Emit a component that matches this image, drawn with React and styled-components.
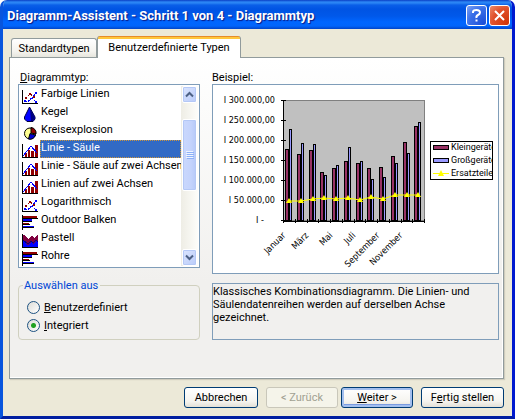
import React, { useState } from "react";
import styled, { createGlobalStyle, css } from "styled-components";

const UI_FONT = 'Roboto, "Liberation Sans", sans-serif';
const CHART_FONT = '"DejaVu Sans Condensed", "DejaVu Sans", sans-serif';

const GlobalStyle = createGlobalStyle`
  *, *::before, *::after { box-sizing: border-box; }
  body { margin: 0; background: #fff; }
  body, button, input { font: 11px/13px ${UI_FONT}; color: #000; }
`;

const Window = styled.main`
  display: flex;
  flex-direction: column;
  min-height: 100vh;
  border: solid;
  border-width: 0 3px 3px;
  border-color: #0831d9 #0019cf #001ea0 #0855dd;
  border-radius: 7px 7px 0 0;
  background: #ece9d8;
  overflow: hidden;
`;

const TitleBar = styled.header`
  display: flex;
  align-items: center;
  gap: 2px;
  height: 29px;
  margin: 0 -3px;
  padding: 2px 5px 0 7px;
  background: linear-gradient(#0a3fc4 0, #2b86f5 2px, #2a84f4 3px, #0a5fe8 5px, #0054e3 9px, #0058ea 16px, #0066ff 22px, #0165fb 26px, #0144c8 29px);
`;

const Title = styled.h1`
  flex: 1;
  margin: 0;
  color: #fff;
  font: bold 13px/20px ${UI_FONT};
  text-shadow: 1px 1px 1px #0a1883;
  white-space: nowrap;
`;

const CaptionButton = styled.button`
  display: grid;
  place-items: center;
  width: 21px;
  height: 21px;
  padding: 0;
  border: 1px solid #fff;
  border-radius: 3px;
  background: ${(p) =>
    p.$close
      ? "radial-gradient(circle at 90% 90%, #cf3508 0, #e0502a 60%, #ec8c6c 100%)"
      : "radial-gradient(circle at 90% 90%, #1c4fd8 0, #3a6fe8 60%, #80a4f4 100%)"};
`;

const Body = styled.div`
  flex: 1;
  display: flex;
  flex-direction: column;
  padding: 7px 8px 8px 6px;
`;

const TabList = styled.div`
  display: flex;
  align-items: flex-end;
  padding-left: 2px;
`;

const Tab = styled.button`
  position: relative;
  min-width: 86px;
  height: 19px;
  padding: 0 6px;
  border: 1px solid #919b9c;
  border-bottom: 0;
  border-radius: 3px 3px 0 0;
  background: linear-gradient(#fff, #f4f3ee 70%, #e6e5dd);
  white-space: nowrap;
  ${(p) =>
    p.$active &&
    css`
      min-width: 144px;
      height: 22px;
      margin-bottom: -1px;
      border-top: 0;
      background: linear-gradient(#e68b2c 1px, #ffc73c 1px 3px, #fff 3px);
      z-index: 1;
    `}
`;

const Panel = styled.section`
  flex: 1;
  display: grid;
  grid-template-columns: minmax(0, 182fr) minmax(0, 287fr);
  align-content: start;
  column-gap: 12px;
  padding: 13px 4px 0 8px;
  border: 1px solid #919b9c;
  background: linear-gradient(#fff, #fcfcfb 15%, #f1f0ee 70%);
  box-shadow: inset -1px -1px #fff, 1px 1px 1px #cfccbd;
`;

const Column = styled.div`
  display: flex;
  flex-direction: column;
`;

const FieldLabel = styled.span`
  padding-left: ${(p) => (p.$indent ? "2px" : "0")};
  line-height: 13px;
  white-space: nowrap;
`;

const ListFrame = styled.div`
  display: flex;
  padding: 1px;
  border: 1px solid #7f9db9;
  background: #fff;
`;

const List = styled.ul`
  flex: 1;
  min-width: 0;
  margin: 0;
  padding: 0 0 0 2px;
  list-style: none;
`;

const Item = styled.li`
  display: flex;
  gap: 2px;
  height: 18px;
  white-space: nowrap;
`;

const ItemIcon = styled.svg`
  flex: none;
  align-self: flex-end;
  width: 16px;
  height: 16px;
`;

const ItemText = styled.span`
  flex: 1;
  padding-left: 1px;
  line-height: 15px;
  ${(p) =>
    p.$selected &&
    css`
      color: #fff;
      background: #316ac5;
      outline: 1px dotted #ce953a;
      outline-offset: -1px;
    `}
`;

const ScrollBar = styled.div`
  display: flex;
  flex-direction: column;
  width: 17px;
  padding: 0 1px;
  background: linear-gradient(90deg, #eeede5, #fdfdfa);
`;

const ScrollButton = styled.button`
  display: grid;
  place-items: center;
  height: 17px;
  padding: 0;
  border: 1px solid #fff;
  border-radius: 2px;
  background: linear-gradient(135deg, #dbe5fe, #b9cbf9);
  box-shadow: inset 0 0 0 1px #b4c8f6;
`;

const ScrollTrack = styled.div`
  flex: 1;
  display: flex;
  padding-top: 16px;
`;

const ScrollThumb = styled.div`
  flex: 1;
  display: grid;
  place-items: center;
  height: 72px;
  border: 1px solid #fff;
  border-radius: 2px;
  background: linear-gradient(90deg, #cad8fd, #c4d3fc 60%, #b6c9f8);
  box-shadow: inset 0 0 0 1px #b4c8f6;
`;

const Preview = styled.div`
  height: 190px;
  border: 1px solid #7f9db9;
  background: #fff;
  overflow: hidden;
  svg { display: block; }
`;

const Description = styled.p`
  height: 57px;
  margin: 9px 0 0;
  padding: 1px 0;
  border: 1px solid #7f9db9;
  white-space: pre-line;
`;

const Group = styled.fieldset`
  display: flex;
  flex-direction: column;
  gap: 5px;
  height: 61px;
  margin: 11px 0 0;
  padding: 9px 8px 0;
  border: 1px solid #d0d0bf;
  border-radius: 4px;
`;

const Legend = styled.legend`
  margin-left: -4px;
  padding: 0 2px 0 1px;
  color: #0046d5;
`;

const RadioLabel = styled.label`
  display: flex;
  align-items: center;
  gap: 4px;
  height: 13px;
`;

const Radio = styled.input`
  appearance: none;
  width: 13px;
  height: 13px;
  margin: 0;
  border: 1px solid #1d5281;
  border-radius: 50%;
  background: linear-gradient(135deg, #dcdcd7, #fff);
  &:checked {
    background: radial-gradient(circle, #21a121 0 2px, transparent 3px), linear-gradient(135deg, #dcdcd7, #fff);
  }
`;

const Footer = styled.footer`
  display: flex;
  justify-content: flex-end;
  gap: 3px;
  padding-top: 8px;
`;

const PushButton = styled.button`
  width: ${(p) => (p.$wide ? "83px" : p.$medium ? "74px" : "72px")};
  height: 21px;
  margin-left: ${(p) => (p.$apart ? "5px" : "0")};
  padding: 0;
  border: 1px solid #003c74;
  border-radius: 3px;
  background: linear-gradient(#fff, #f5f4ef 70%, #e3e0d6);
  white-space: nowrap;
  ${(p) => p.$primary && css`box-shadow: inset 0 0 0 2px #a3bfee, inset 0 -3px #7a9be0;`}
  &:disabled {
    color: #a1a192;
    border-color: #c9c7ba;
    background: #f5f4ea;
  }
`;

const Axes = () => <path d="M.5 2v13.500H16" fill="none" stroke="#000" />;

const icons = {
  lines: (
    <>
      <Axes />
      <path d="M3 13.500h3l4-4 4 5" fill="none" stroke="#00f" strokeDasharray="2 1" />
      <path d="M4 10l4-4 4 3" fill="none" stroke="#900000" strokeDasharray="2 1" />
      <path d="M10 10l4-5" fill="none" stroke="#00f" />
      <path d="M2 12h2v2H2zM13 4h2v2h-2zM13 13h2v2h-2z" fill="#00f" />
      <path d="M3 9h2v2H3zM7 5h2v2H7zM11 8h2v2h-2z" fill="#900000" />
    </>
  ),
  cone: (
    <g shapeRendering="auto">
      <path d="M7.500 1L13 11v2l-2 2.500H5L2.500 13v-2z" fill="#00f" stroke="#000040" />
      <path d="M8 2l4.500 9v2L10.500 15H9z" fill="#000080" />
    </g>
  ),
  pie: (
    <g shapeRendering="auto">
      <circle cx="8" cy="9.500" r="5.500" fill="#ffff90" stroke="#000" />
      <path d="M9 9V3.500a5.500 5.500 0 0 1 5 6.500z" fill="#900000" stroke="#000" />
      <path d="M8 9.500l5.500 1.500a5.500 5.500 0 0 1-7 4z" fill="#0000d0" stroke="#000" />
    </g>
  ),
  combo: (
    <>
      <path d="M3 11h2v4H3zM6 8h2v7H6zM9 9h3v6H9zM13 3h3v12h-3z" fill="#900000" />
      <Axes />
      <path d="M1 14l8-10 6 7" fill="none" stroke="#00f" />
    </>
  ),
  bars: (
    <>
      <path d="M1 2h14v2H1zM1 9h6v2H1z" fill="#900000" />
      <path d="M1 5h9v2H1zM1 12h11v2H1z" fill="#00f" />
      <path d="M.5 1v15M1 4.500h15M1 7.500h9M1 10.500h7M1 13.500h11" stroke="#000" fill="none" />
    </>
  ),
  area: (
    <>
      <path d="M1 3h1l4 4 4-4 2 3 3-3h1v12H1z" fill="#800040" />
      <path d="M1 9l5 4 3-3 2 2 3-3 2 2v4H1z" fill="#00f" />
      <path d="M1 8l5 4 3-3 2 2 3-3 2 2" fill="none" stroke="#000080" />
      <Axes />
    </>
  ),
};

const types = [
  ["Farbige Linien", "lines"],
  ["Kegel", "cone"],
  ["Kreisexplosion", "pie"],
  ["Linie - Säule", "combo"],
  ["Linie - Säule auf zwei Achsen", "combo"],
  ["Linien auf zwei Achsen", "combo"],
  ["Logarithmisch", "lines"],
  ["Outdoor Balken", "bars"],
  ["Pastell", "area"],
  ["Rohre", "bars"],
];

/* x position, then the tops of the red bar, the blue bar and the line marker */
const groups = [
  [72, 64, 44, 115], [84, 69, 58, 115], [96, 65, 59, 113], [107, 87, 90, 112],
  [119, 83, 80, 113], [131, 76, 62, 112], [143, 78, 76, 114], [154, 83, 94, 111],
  [166, 82, 92, 113], [178, 71, 78, 109], [190, 57, 68, 109], [201, 41, 37, 109],
];
const yLabels = ["I 300.000,00", "I 250.000,00", "I 200.000,00", "I 150.000,00", "I 100.000,00", "I 50.000,00", "I -"];
const yLabelEnd = (label) => (label === "I -" ? 51 : 62);
const months = [["Januar", 73], ["März", 96], ["Mai", 120], ["Juli", 143], ["September", 167], ["November", 190]];

const ChartText = styled.text`
  font: 9px ${(p) => (p.$legend ? UI_FONT : CHART_FONT)};
  fill: #000;
`;

function SampleChart() {
  return (
    <svg width="285" height="188" viewBox="0 0 285 188" role="img" aria-label="Linie - Säule">
      <rect x="70.500" y="15.500" width="141" height="120" fill="#c0c0c0" stroke="#808080" />
      {groups.map(([x, red, blue]) => (
        <g key={x} stroke="#000" shapeRendering="crispEdges">
          <rect x={x + 0.5} y={red + 0.5} width="3" height={135 - red} fill="#993366" />
          <rect x={x + 4.5} y={blue + 0.5} width="2" height={135 - blue} fill="#9999ff" />
        </g>
      ))}
      <path
        d="M70.5 15v121H212M68 15.5h5M68 35.5h5M68 55.5h5M68 75.5h5M68 95.5h5M68 115.5h5M68 135.5h5M70.5 134v4M82.5 134v4M94.5 134v4M105.5 134v4M117.5 134v4M129.5 134v4M141.5 134v4M152.5 134v4M164.5 134v4M176.5 134v4M188.5 134v4M199.5 134v4M211.5 134v4"
        fill="none" stroke="#000" shapeRendering="crispEdges"
      />
      <polyline points={groups.map(([x, , , y]) => `${x + 4},${y + 1}`).join(" ")} fill="none" stroke="#ff0" />
      {groups.map(([x, , , y]) => (
        <path key={x} d={`M${x + 4} ${y - 2}l3 5h-6z`} fill="#ff0" />
      ))}
      {yLabels.map((t, i) => (
        <ChartText key={t} x={yLabelEnd(t)} y={18 + i * 20} textAnchor="end">{t}</ChartText>
      ))}
      {months.map(([t, x]) => (
        <ChartText key={t} textAnchor="end" transform={`translate(${x} 151) rotate(-45)`}>{t}</ChartText>
      ))}
      <rect x="217.500" y="56.500" width="62" height="38" fill="#fff" stroke="#000" />
      <rect x="220.500" y="60.500" width="15" height="4" fill="#993366" stroke="#000" />
      <rect x="220.500" y="73.500" width="15" height="4" fill="#9999ff" stroke="#000" />
      <path d="M220 88.500h16" stroke="#ff0" />
      <path d="M228 85l3 6h-6z" fill="#ff0" />
      <clipPath id="legendClip"><rect x="218" y="57" width="61" height="37" /></clipPath>
      <g clipPath="url(#legendClip)">
        <ChartText $legend x="238" y="65">Kleingeräte</ChartText>
        <ChartText $legend x="238" y="78">Großgeräte</ChartText>
        <ChartText $legend x="238" y="91">Ersatzteile</ChartText>
      </g>
    </svg>
  );
}

const Arrow = ({ down }) => (
  <svg width="9" height="7" viewBox="0 0 9 7" aria-hidden="true">
    <path d={down ? "M1 1.500l3.500 3.500L8 1.500" : "M1 5.500L4.500 2 8 5.500"} fill="none" stroke="#4d6185" strokeWidth="2" />
  </svg>
);

export default function App() {
  const [selected, setSelected] = useState(3);
  const [source, setSource] = useState("builtin");
  return (
    <>
      <GlobalStyle />
      <Window>
        <TitleBar>
          <Title>Diagramm-Assistent - Schritt 1 von 4 - Diagrammtyp</Title>
          <CaptionButton aria-label="Hilfe">
            <svg width="13" height="15" viewBox="0 0 13 15">
              <path d="M3 5V4q0-2 3.500-2T10 4.500q0 1.500-2 2.500T6.500 10" fill="none" stroke="#fff" strokeWidth="2" />
              <path d="M5.500 11.500h2v2h-2z" fill="#fff" />
            </svg>
          </CaptionButton>
          <CaptionButton $close aria-label="Schließen">
            <svg width="13" height="13" viewBox="0 0 13 13">
              <path d="M2 2l9 9M11 2l-9 9" stroke="#fff" strokeWidth="2" />
            </svg>
          </CaptionButton>
        </TitleBar>
        <Body>
          <TabList role="tablist">
            <Tab role="tab">Standardtypen</Tab>
            <Tab role="tab" aria-selected="true" $active>Benutzerdefinierte Typen</Tab>
          </TabList>
          <Panel role="tabpanel">
            <Column>
              <FieldLabel id="typeLabel" $indent><u>D</u>iagrammtyp:</FieldLabel>
              <ListFrame>
                <List role="listbox" aria-labelledby="typeLabel" tabIndex={0}>
                  {types.map(([name, icon], i) => (
                    <Item key={name} role="option" aria-selected={i === selected} onClick={() => setSelected(i)}>
                      <ItemIcon viewBox="0 0 16 16" shapeRendering="crispEdges" aria-hidden="true">{icons[icon]}</ItemIcon>
                      <ItemText $selected={i === selected}>{name}</ItemText>
                    </Item>
                  ))}
                </List>
                <ScrollBar>
                  <ScrollButton aria-label="Nach oben"><Arrow /></ScrollButton>
                  <ScrollTrack>
                    <ScrollThumb>
                      <svg width="8" height="8" viewBox="0 0 8 8">
                        <path d="M0 .5h7M0 2.500h7M0 4.500h7M0 6.500h7" stroke="#eef4fe" />
                        <path d="M1 1.500h7M1 3.500h7M1 5.500h7M1 7.500h7" stroke="#8cb0f8" />
                      </svg>
                    </ScrollThumb>
                  </ScrollTrack>
                  <ScrollButton aria-label="Nach unten"><Arrow down /></ScrollButton>
                </ScrollBar>
              </ListFrame>
              <Group>
                <Legend>Auswählen aus</Legend>
                <RadioLabel>
                  <Radio type="radio" name="source" checked={source === "custom"} onChange={() => setSource("custom")} />
                  <span><u>B</u>enutzerdefiniert</span>
                </RadioLabel>
                <RadioLabel>
                  <Radio type="radio" name="source" checked={source === "builtin"} onChange={() => setSource("builtin")} />
                  <span><u>I</u>ntegriert</span>
                </RadioLabel>
              </Group>
            </Column>
            <Column>
              <FieldLabel>Beispiel:</FieldLabel>
              <Preview><SampleChart /></Preview>
              <Description>
                {"Klassisches Kombinationsdiagramm. Die Linien- und\nSäulendatenreihen werden auf derselben Achse\ngezeichnet."}
              </Description>
            </Column>
          </Panel>
          <Footer>
            <PushButton $medium>Abbrechen</PushButton>
            <PushButton $apart disabled>&lt; Zurück</PushButton>
            <PushButton $primary><u>W</u>eiter &gt;</PushButton>
            <PushButton $wide $apart>F<u>e</u>rtig stellen</PushButton>
          </Footer>
        </Body>
      </Window>
    </>
  );
}
